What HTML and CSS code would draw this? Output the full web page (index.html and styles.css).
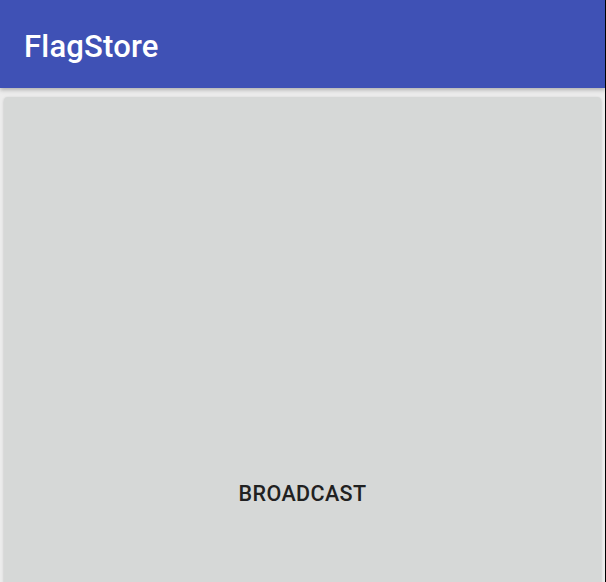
FILE: index.html
```html
<!DOCTYPE html>
<html>
<head>
<meta charset="utf-8">
<link rel="stylesheet" href="styles.css">
</head>
<body>
<div class="screen">
  <header class="appbar"><h1 class="title">FlagStore</h1></header>
  <main class="content">
    <button class="broadcast">BROADCAST</button>
  </main>
</div>
</body>
</html>
```

FILE: styles.css
```css
html, body {
  margin: 0;
  padding: 0;
  height: 100%;
  overflow: hidden;
}
body {
  background: #000;
  font-family: Roboto, "Noto Sans", sans-serif;
}
.screen {
  width: 605px;
  height: 582px;
  overflow: hidden;
  display: flex;
  flex-direction: column;
  background: #ececec;
}
.appbar {
  height: 88px;
  flex: none;
  box-sizing: border-box;
  background: #3f51b5;
  display: flex;
  align-items: center;
  padding-left: 24px;
  padding-top: 5px;
  box-shadow: 0 2px 4px rgba(0,0,0,0.25);
  position: relative;
  z-index: 1;
}
.title {
  margin: 0;
  color: #fff;
  font-size: 31px;
  font-weight: 500;
  letter-spacing: 0.2px;
}
.content {
  flex: 1;
  display: flex;
  padding: 9px 4px 0 4px;
  min-height: 0;
}
.broadcast {
  flex: 1;
  height: 520px;
  border: none;
  border-radius: 4px;
  background: #d6d8d7;
  box-shadow: 0 1px 3px rgba(0,0,0,0.22);
  font-family: Roboto, "Noto Sans", sans-serif;
  font-size: 21.5px;
  font-weight: 500;
  color: #212121;
  letter-spacing: 0.4px;
  padding: 384px 0 0 0;
  display: flex;
  justify-content: center;
  align-items: flex-start;
}
```
